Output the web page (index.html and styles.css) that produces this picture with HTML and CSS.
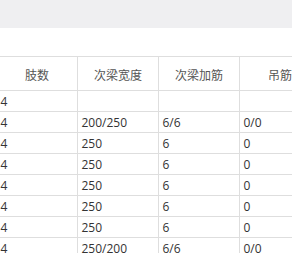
FILE: index.html
```html
<!DOCTYPE html>
<html lang="zh">
<head>
<meta charset="utf-8">
<link rel="stylesheet" href="styles.css">
</head>
<body>
<div class="topbar"></div>
<div class="table">
  <div class="th">肢数</div><div class="th">次梁宽度</div><div class="th">次梁加筋</div><div class="th">吊筋</div>
  <div class="td">4</div><div class="td"></div><div class="td"></div><div class="td"></div>
  <div class="td">4</div><div class="td">200/250</div><div class="td">6/6</div><div class="td">0/0</div>
  <div class="td">4</div><div class="td">250</div><div class="td">6</div><div class="td">0</div>
  <div class="td">4</div><div class="td">250</div><div class="td">6</div><div class="td">0</div>
  <div class="td">4</div><div class="td">250</div><div class="td">6</div><div class="td">0</div>
  <div class="td">4</div><div class="td">250</div><div class="td">6</div><div class="td">0</div>
  <div class="td">4</div><div class="td">250</div><div class="td">6</div><div class="td">0</div>
  <div class="td">4</div><div class="td">250/200</div><div class="td">6/6</div><div class="td">0/0</div>
</div>
</body>
</html>
```
FILE: styles.css
```css
html, body {
  margin: 0;
  padding: 0;
  background: #ffffff;
  overflow: hidden;
}
body {
  width: 292px;
  height: 253px;
  font-family: "Open Sans", "Noto Sans CJK SC", sans-serif;
  font-size: 12px;
}
.topbar {
  height: 28px;
  background: #efeff1;
}
.table {
  margin-top: 28px;
  margin-left: -3px;
  display: grid;
  grid-template-columns: repeat(4, 81px);
}
.th, .td {
  box-sizing: border-box;
  border-right: 1px solid #dedede;
  border-bottom: 1px solid #dedede;
  display: flex;
  align-items: center;
  white-space: nowrap;
}
.th {
  height: 35px;
  border-top: 1px solid #dedede;
  justify-content: center;
  color: #555;
  padding-top: 3px;
}
.td {
  height: 21px;
  padding-left: 3.5px;
  color: #333;
  padding-top: 1px;
}
```
